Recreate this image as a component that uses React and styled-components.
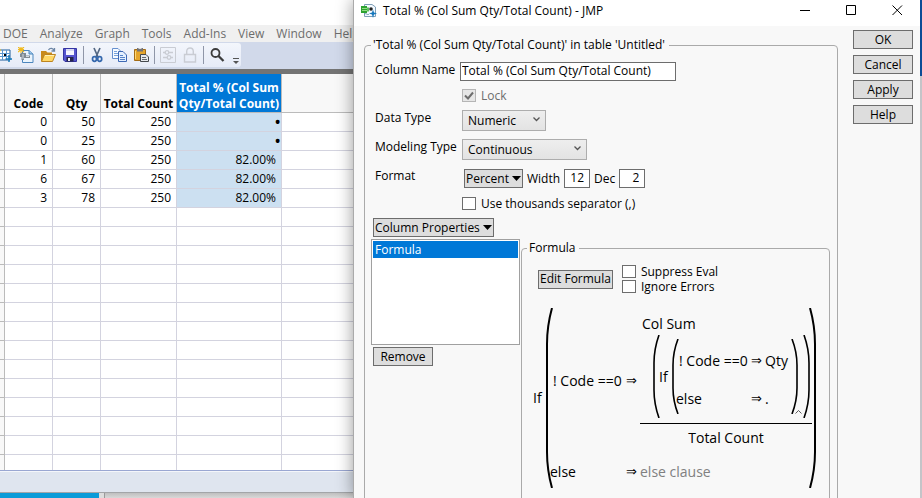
import React, { useState } from 'react';
import styled, { createGlobalStyle } from 'styled-components';

const rows = [
  { code: '0', qty: '50', total: '250', pct: '•' },
  { code: '0', qty: '25', total: '250', pct: '•' },
  { code: '1', qty: '60', total: '250', pct: '82.00%' },
  { code: '6', qty: '67', total: '250', pct: '82.00%' },
  { code: '3', qty: '78', total: '250', pct: '82.00%' },
];
const emptyRows = Array.from({ length: 15 }, (_, i) => i);
const menus = ['DOE', 'Analyze', 'Graph', 'Tools', 'Add-Ins', 'View', 'Window', 'Help'];

export default function App() {
  return (
    <>
      <GlobalStyle />
      <Desktop>
        <TableWindow />
        <ColumnDialog />
        <Edge />
      </Desktop>
    </>
  );
}

function TableWindow() {
  return (
    <MainWindow>
      <Caption />
      <MenuBar>
        {menus.map((menu) => (
          <MenuItem key={menu}>{menu}</MenuItem>
        ))}
      </MenuBar>
      <ToolStrip>
        <Tools>
          <Tool aria-label="New data table"><TableIcon /></Tool>
          <Tool aria-label="New script"><ScriptIcon /></Tool>
          <Tool aria-label="Open"><FolderIcon /></Tool>
          <Tool aria-label="Save"><DiskIcon /></Tool>
          <Separator />
          <Tool aria-label="Cut"><ScissorsIcon /></Tool>
          <Tool aria-label="Copy"><CopyIcon /></Tool>
          <Tool aria-label="Paste"><PasteIcon /></Tool>
          <Separator />
          <Tool aria-label="Filter" disabled><SlidersIcon /></Tool>
          <Tool aria-label="Lock" disabled><LockIcon /></Tool>
          <Separator />
          <Tool aria-label="Search"><SearchIcon /></Tool>
          <Overflow aria-label="More tools">
            <svg width="6" height="7" viewBox="0 0 6 7">
              <path d="M0 0.5H6" stroke="#555" />
              <path d="M0 3H6L3 6Z" fill="#555" />
            </svg>
          </Overflow>
        </Tools>
      </ToolStrip>
      <Sheet>
        <DataTable>
          <colgroup>
            <Col $width={5} />
            <Col $width={48} />
            <Col $width={48} />
            <Col $width={76} />
            <Col $width={105} />
            <col />
          </colgroup>
          <thead>
            <tr>
              <th></th>
              <th>Code</th>
              <th>Qty</th>
              <th>Total Count</th>
              <th className="selected">Total % (Col Sum<br />Qty/Total Count)</th>
              <th></th>
            </tr>
          </thead>
          <tbody>
            {rows.map((row, i) => (
              <tr key={i}>
                <td></td>
                <td>{row.code}</td>
                <td>{row.qty}</td>
                <td>{row.total}</td>
                <Percent $missing={row.pct === '•'}>{row.pct}</Percent>
                <td></td>
              </tr>
            ))}
            {emptyRows.map((i) => (
              <tr key={i}>
                <td></td><td></td><td></td><td></td><td></td><td></td>
              </tr>
            ))}
          </tbody>
        </DataTable>
      </Sheet>
      <StatusBar />
      <Behind>
        <BluePane />
        <GreyPane />
      </Behind>
    </MainWindow>
  );
}

function ColumnDialog() {
  const [name, setName] = useState('Total % (Col Sum Qty/Total Count)');
  const [width, setWidth] = useState('12');
  const [dec, setDec] = useState('2');

  return (
    <Dialog>
      <TitleBar>
        <JmpIcon />
        <Title>Total % (Col Sum Qty/Total Count) - JMP</Title>
        <WindowButton aria-label="Minimize">
          <svg width="11" height="11" viewBox="0 0 11 11"><path d="M0 5.5H10" stroke="#000" /></svg>
        </WindowButton>
        <WindowButton aria-label="Maximize">
          <svg width="11" height="11" viewBox="0 0 11 11"><path d="M0.5 0.5H9.5V9.5H0.5Z" fill="none" stroke="#000" /></svg>
        </WindowButton>
        <WindowButton aria-label="Close">
          <svg width="11" height="11" viewBox="0 0 11 11"><path d="M0.5 0.5L10 10M10 0.5L0.5 10" stroke="#000" /></svg>
        </WindowButton>
      </TitleBar>
      <DialogBody>
        <Group>
          <legend>'Total % (Col Sum Qty/Total Count)' in table 'Untitled'</legend>
          <Form>
            <label htmlFor="name">Column Name</label>
            <TextBox id="name" value={name} onChange={(e) => setName(e.target.value)} />

            <Control>
              <Check label="Lock" checked disabled />
            </Control>

            <label htmlFor="type">Data Type</label>
            <Control>
              <Picker id="type" width={84} options={['Numeric', 'Character', 'Row State']} />
            </Control>

            <label htmlFor="modeling">Modeling Type</label>
            <Control>
              <Picker id="modeling" width={125} options={['Continuous', 'Ordinal', 'Nominal']} />
            </Control>

            <span>Format</span>
            <Control $gap>
              <Button>Percent <Triangle /></Button>
              <label htmlFor="width">Width</label>
              <NumberBox id="width" value={width} onChange={(e) => setWidth(e.target.value)} />
              <label htmlFor="dec">Dec</label>
              <NumberBox id="dec" value={dec} onChange={(e) => setDec(e.target.value)} />
            </Control>

            <Control>
              <Check label="Use thousands separator (,)" />
            </Control>
          </Form>
          <Properties>
            <PropertyList>
              <Button>Column Properties <Triangle /></Button>
              <ListBox>
                <li>Formula</li>
              </ListBox>
              <Button $wide>Remove</Button>
            </PropertyList>
            <FormulaGroup>
              <legend>Formula</legend>
              <FormulaOptions>
                <Button>Edit Formula</Button>
                <div>
                  <Check label="Suppress Eval" />
                  <Check label="Ignore Errors" />
                </div>
              </FormulaOptions>
              <Formula />
            </FormulaGroup>
          </Properties>
        </Group>
        <Actions>
          <Button>OK</Button>
          <Button>Cancel</Button>
          <Button>Apply</Button>
          <Button>Help</Button>
        </Actions>
      </DialogBody>
    </Dialog>
  );
}

function Formula() {
  return (
    <Expression>
      <Keyword>If</Keyword>
      <Paren height={180} curve={36} weight={2} />
      <OuterClauses>
        <Condition>! Code ==0</Condition>
        <Arrow>⇒</Arrow>
        <Fraction>
          <Numerator>
            <span>Col Sum</span>
            <Argument>
              <Paren height={83} curve={28} weight={1.6} />
              <Keyword>If</Keyword>
              <Paren height={75} curve={26} weight={1.6} />
              <InnerClauses>
                <Condition>! Code ==0</Condition>
                <Arrow>⇒</Arrow>
                <span>Qty</span>
                <span>else</span>
                <Arrow>⇒</Arrow>
                <span>.</span>
              </InnerClauses>
              <Paren height={75} curve={26} weight={1.6} close />
              <Caret width="7" height="4" viewBox="0 0 7 4">
                <path d="M0.5 3.5L3.5 0.5L6.5 3.5" fill="none" stroke="#333" strokeWidth="0.8" />
              </Caret>
              <Paren height={83} curve={28} weight={1.6} close />
            </Argument>
          </Numerator>
          <Denominator>Total Count</Denominator>
        </Fraction>
        <span>else</span>
        <Arrow>⇒</Arrow>
        <Placeholder>else clause</Placeholder>
      </OuterClauses>
      <Paren height={180} curve={36} weight={2} close />
    </Expression>
  );
}

function Paren({ height, curve, weight, close }) {
  const d = close
    ? `M1 0Q6 ${curve / 2} 6 ${curve}V${height - curve}Q6 ${height - curve / 2} 1 ${height}`
    : `M7 0Q2 ${curve / 2} 2 ${curve}V${height - curve}Q2 ${height - curve / 2} 7 ${height}`;
  return (
    <ParenShape $close={close} width="8" height={height} viewBox={`0 0 8 ${height}`}>
      <path d={d} fill="none" stroke="#000" strokeWidth={weight} />
    </ParenShape>
  );
}

function Check({ label, checked = false, disabled }) {
  const [on, setOn] = useState(checked);
  return (
    <CheckLabel $disabled={disabled}>
      <CheckInput type="checkbox" checked={on} disabled={disabled} onChange={() => setOn(!on)} />
      {on && (
        <CheckMark width="14" height="13" viewBox="0 0 14 13">
          <path d="M3 6.5L6 9.5L11 3.5" fill="none" stroke="#6d6d6d" strokeWidth="2" />
        </CheckMark>
      )}
      {label}
    </CheckLabel>
  );
}

function Picker({ id, width, options }) {
  return (
    <PickerBox $width={width}>
      <select id={id}>
        {options.map((option) => (
          <option key={option}>{option}</option>
        ))}
      </select>
      <svg width="7" height="5" viewBox="0 0 7 5">
        <path d="M0.5 0.5L3.5 3.5L6.5 0.5" fill="none" stroke="#555" strokeWidth="1.3" />
      </svg>
    </PickerBox>
  );
}

const Triangle = () => (
  <svg width="9" height="5" viewBox="0 0 9 5">
    <path d="M0 0H9L4.5 5Z" fill="#000" />
  </svg>
);

const TableIcon = () => (
  <svg width="16" height="16" viewBox="0 0 16 16">
    <path d="M3 3H14V13H3Z" fill="#fff" stroke="#1d5c9c" />
    <path d="M3 6.5H14M3 9.5H14M6.5 3V13M10.5 3V13" stroke="#5a97cf" />
    <path d="M8 7H10V9H8Z" fill="#000" />
    <path d="M13 8V15M9.5 12H16" stroke="#1478b8" strokeWidth="1.5" />
    <path d="M3 0L5 3L3 6L1 3Z" fill="#f2c32c" />
  </svg>
);

const ScriptIcon = () => (
  <svg width="16" height="16" viewBox="0 0 16 16">
    <path d="M4.5 3.5H11L15 7V15.5H4.5Z" fill="#eaf4fd" stroke="#4c86bd" />
    <path d="M11 3.5V7H15" fill="#9ec7ea" stroke="#4c86bd" />
    <path d="M3 6H8V8.5H12V11H6V13H3.5V10H2V7Z" fill="#7f8a92" />
    <path d="M5 7V12M8 9.5H11" stroke="#d5dade" />
    <path d="M0 0L6 5M6 0L0 5M3 0V6M0 2.5H6" stroke="#f0b91e" strokeWidth="1.2" />
  </svg>
);

const FolderIcon = () => (
  <svg width="16" height="16" viewBox="0 0 16 16">
    <path d="M1 4H6L7.5 5.5H12V14H1Z" fill="#c98a1b" />
    <path d="M1.5 14.5L4.5 7.5H15.5L12.5 14.5Z" fill="#ffd765" stroke="#bd8420" />
    <path d="M5 8.5H14" stroke="#fff0b5" />
    <path d="M8.5 3C10 0.5 13 1 14 3.5M14.5 1V4H11.5" fill="none" stroke="#6d86a5" strokeWidth="1.3" />
  </svg>
);

const DiskIcon = () => (
  <svg width="16" height="16" viewBox="0 0 16 16">
    <path d="M1.5 1.5H14.5V14.5H3L1.5 13Z" fill="#5454cf" stroke="#3535a2" />
    <path d="M4 2H12V8H4Z" fill="#f5f6ff" />
    <path d="M4 3H12" stroke="#b9bce9" />
    <path d="M4.5 10H11.5V14.5H4.5Z" fill="#25254b" />
    <path d="M6 11H8V14H6Z" fill="#eee" />
  </svg>
);

const ScissorsIcon = () => (
  <svg width="16" height="16" viewBox="0 0 16 16">
    <path d="M5 1L9 10M11 1L7 10" stroke="#536783" strokeWidth="1.7" />
    <ellipse cx="5.5" cy="12" rx="2" ry="2.3" fill="none" stroke="#3568ad" strokeWidth="1.7" />
    <ellipse cx="10.7" cy="12" rx="2" ry="2.3" fill="none" stroke="#3568ad" strokeWidth="1.7" />
  </svg>
);

const CopyIcon = () => (
  <svg width="16" height="16" viewBox="0 0 16 16">
    <path d="M1.5 1.5H7L9.5 4V11.5H1.5Z" fill="#f7fbff" stroke="#6690cf" />
    <path d="M3 4.5H6M3 6.5H8M3 8.5H8" stroke="#78a2db" />
    <path d="M7.5 4.5H12L15.5 8V14.5H7.5Z" fill="#e4f0ff" stroke="#3e69b5" />
    <path d="M9 8.5H12M9 10.5H14M9 12.5H14" stroke="#5683c9" />
  </svg>
);

const PasteIcon = () => (
  <svg width="16" height="16" viewBox="0 0 16 16">
    <path d="M1.5 2.5H12.5V13.5H1.5Z" fill="#e5a52c" stroke="#a36c17" />
    <path d="M2.5 4V12" stroke="#ffd877" />
    <path d="M4 1H10V4.5H4Z" fill="#747477" />
    <path d="M5.5 1.5H8.5" stroke="#ddd" />
    <path d="M7.5 7.5H13L15.5 10V14.5H7.5Z" fill="#e6e9ed" stroke="#45494f" />
    <path d="M9 10.5H13M9 12.5H14" stroke="#65696e" />
  </svg>
);

const SlidersIcon = () => (
  <svg width="16" height="16" viewBox="0 0 16 16" fill="none" stroke="#c9ccd3">
    <path d="M0.5 0.5H15.5V15.5H0.5Z" />
    <path d="M3 5.5H5M9 5.5H13M3 10.5H7M11 10.5H13" strokeWidth="1.5" />
    <circle cx="7" cy="5.5" r="1.8" strokeWidth="1.3" />
    <circle cx="9" cy="10.5" r="1.8" strokeWidth="1.3" />
  </svg>
);

const LockIcon = () => (
  <svg width="16" height="16" viewBox="0 0 16 16" fill="none" stroke="#c9ccd3" strokeWidth="1.4">
    <path d="M2.5 7.5H13.5V15H2.5Z" />
    <path d="M4.7 7V4.5C4.7 -0.2 11.3 -0.2 11.3 4.5V7" />
  </svg>
);

const SearchIcon = () => (
  <svg width="16" height="16" viewBox="0 0 16 16" fill="none" stroke="#3c3c3c">
    <circle cx="6.5" cy="6" r="4" strokeWidth="1.8" />
    <path d="M9.5 9L14.5 14" strokeWidth="2.3" />
  </svg>
);

const JmpIcon = () => (
  <svg width="16" height="16" viewBox="0 0 16 16">
    <path d="M3.5 1.5H11L14.5 4V13.5H3.5Z" fill="#f5faff" stroke="#7f9fb7" />
    <path d="M0 3H6V10H0Z" fill="#2da22f" />
    <path d="M6 4.5H8V8.5H6Z" fill="#5cc15a" />
    <path d="M1 5.5H6M1 7.5H6" stroke="#92dc84" />
    <circle cx="10" cy="6" r="1.8" fill="#222" />
    <path d="M3 11.5C5 9 6.5 13 8 11" fill="none" stroke="#6c90ae" />
    <path d="M12 6.5L13 9.5L16 10.5L13 11.5L12 15L11 11.5L8 10.5L11 9.5Z" fill="#1678bd" />
  </svg>
);

const GlobalStyle = createGlobalStyle`
  * {
    box-sizing: border-box;
  }

  body {
    margin: 0;
    font-family: "Open Sans", "Noto Sans", sans-serif;
    font-size: 12px;
    line-height: 16px;
    color: #000;
    background: #fff;
  }

  button, input, select {
    font: inherit;
    color: inherit;
  }

  svg {
    flex: none;
  }
`;

const Desktop = styled.div`
  display: grid;
  grid-template-columns: minmax(0, 353fr) minmax(0, 567fr) 2px;
  height: 100vh;
  overflow: hidden;
`;

const MainWindow = styled.main`
  display: flex;
  flex-direction: column;
  min-height: 0;
  overflow: hidden;
`;

const Caption = styled.div`
  height: 25px;
  flex: none;
`;

const MenuBar = styled.nav`
  display: flex;
  flex: none;
  gap: 12px;
  height: 17px;
  padding-left: 3px;
  background: #f0f0f0;
  overflow: hidden;
`;

const MenuItem = styled.button`
  padding: 0;
  border: 0;
  background: none;
  color: #6d6d6d;
  white-space: nowrap;
`;

const ToolStrip = styled.div`
  flex: none;
  height: 32px;
  padding-top: 1px;
  background: #d1d9ea;
  border-bottom: 5px solid #747474;
  overflow: hidden;
`;

const Tools = styled.div`
  display: flex;
  align-items: center;
  width: 248px;
  height: 24px;
  margin-left: -7px;
  background: linear-gradient(#f3f6fc, #e6ebf7);
  border-radius: 0 3px 3px 0;
`;

const Tool = styled.button`
  display: flex;
  justify-content: center;
  flex: none;
  width: 22px;
  padding: 0;
  border: 0;
  background: none;
`;

const Separator = styled.span`
  width: 1px;
  height: 18px;
  margin: 0 2px;
  background: #8f96a8;
`;

const Overflow = styled.button`
  display: flex;
  align-self: flex-end;
  margin-left: auto;
  padding: 2px;
  border: 0;
  background: none;
`;

const Sheet = styled.div`
  flex: 1;
  min-height: 0;
  overflow: hidden;
`;

const Col = styled.col`
  width: ${({ $width }) => $width}px;
`;

const DataTable = styled.table`
  width: 100%;
  table-layout: fixed;
  border-collapse: separate;
  border-spacing: 0;

  th, td {
    padding: 0 5px 0 0;
    border-right: 1px solid #d3d3df;
    border-bottom: 1px solid #d3d3df;
    text-align: right;
  }

  th {
    height: 39px;
    padding: 0;
    border-color: #bbb;
    background: #f8f8f8;
    text-align: center;
    vertical-align: bottom;
    white-space: nowrap;
  }

  th.selected {
    color: #fff;
    background: #0078d7;
  }

  td {
    height: 19px;
    line-height: 16px;
  }

  td:first-child {
    background: #f8f8f8;
    border-color: #bbb;
  }

  th:last-child, td:last-child {
    border-right: 0;
  }
`;

const Percent = styled.td`
  background: #cce0f1;
  font-size: ${({ $missing }) => ($missing ? 18 : 12)}px;

  && {
    padding-right: ${({ $missing }) => ($missing ? 0 : 5)}px;
  }
`;

const StatusBar = styled.footer`
  flex: none;
  height: 23px;
  background: #dfe5ef;
  border-top: 1px solid #9aa7d2;
  border-bottom: 1px solid #a3a5a8;
  box-shadow: inset 0 1px #f4f6fa;
`;

const Behind = styled.div`
  display: flex;
  gap: 5px;
  flex: none;
  height: 5px;
  background: #ddd;
`;

const BluePane = styled.div`
  width: 99px;
  background: #0a9bd8;
`;

const GreyPane = styled.div`
  flex: 1;
  border-left: 1px solid #999;
  background: linear-gradient(#bfbfbf, #d8d8d8);
`;

const Dialog = styled.section`
  position: relative;
  display: flex;
  flex-direction: column;
  min-height: 0;
  background: #f8f8f8;
  border-left: 1px solid #aaa;
  box-shadow: 0 0 16px rgba(0, 0, 0, 0.4);
`;

const Edge = styled.div`
  position: relative;
  background: linear-gradient(#0b4c96 76px, #c4c4c8 76px);
`;

const TitleBar = styled.header`
  display: flex;
  align-items: center;
  flex: none;
  height: 26px;
  padding: 0 0 5px 7px;
  background: #fff;
`;

const Title = styled.h1`
  flex: 1;
  margin: 0 0 0 6px;
  font-size: 12px;
  font-weight: 400;
  white-space: nowrap;
`;

const WindowButton = styled.button`
  display: flex;
  justify-content: center;
  width: 46px;
  padding: 0;
  border: 0;
  background: none;
`;

const DialogBody = styled.div`
  display: flex;
  gap: 15px;
  flex: 1;
  min-height: 0;
  padding: 4px 7px 0 10px;
  overflow: hidden;
`;

const Group = styled.fieldset`
  flex: 1;
  align-self: flex-start;
  min-width: 0;
  margin: 7px 0 0;
  padding: 9px 7px 20px 6px;
  border: 1px solid #aaa;
  border-radius: 4px;

  legend {
    padding: 0 4px 0 2px;
  }
`;

const Form = styled.div`
  display: grid;
  grid-template-columns: 85px 1fr;
  grid-template-rows: 19px 13px 21px 21px 21px 13px;
  row-gap: 8px;
  margin: 0 0 8px 4px;
  white-space: nowrap;
`;

const TextBox = styled.input`
  width: 216px;
  height: 19px;
  padding: 0 1px 2px;
  border: 1px solid #6d6d6d;
  background: #fff;
`;

const NumberBox = styled(TextBox)`
  width: 26px;
  padding-right: 5px;
  text-align: right;
`;

const Control = styled.div`
  display: flex;
  align-items: center;
  grid-column: 2;
  gap: ${({ $gap }) => ($gap ? 4 : 0)}px;
  padding-left: ${({ $gap }) => ($gap ? 4 : 2)}px;
`;

const Button = styled.button`
  display: flex;
  align-items: center;
  justify-content: center;
  gap: 3px;
  flex: none;
  min-width: ${({ $wide }) => ($wide ? 60 : 0)}px;
  height: 19px;
  padding: 0 1px;
  border: 1px solid #6d6d6d;
  background: #ddd;
  white-space: nowrap;
`;

const PickerBox = styled.div`
  position: relative;
  width: ${({ $width }) => $width}px;

  select {
    display: block;
    width: 100%;
    height: 21px;
    padding: 0 5px;
    border: 1px solid #adadad;
    border-radius: 0;
    background: linear-gradient(#eee, #e3e3e3);
    appearance: none;
  }

  svg {
    position: absolute;
    top: 7px;
    right: 6px;
    pointer-events: none;
  }
`;

const CheckLabel = styled.label`
  position: relative;
  display: flex;
  align-items: center;
  gap: 5px;
  height: 15px;
  line-height: 15px;
  color: ${({ $disabled }) => ($disabled ? '#6d6d6d' : '#000')};
  white-space: nowrap;
`;

const CheckInput = styled.input`
  width: 14px;
  height: 13px;
  margin: 0;
  border: 1px solid #6d6d6d;
  background: #fff;
  appearance: none;

  &:disabled {
    border-color: #b5b5b5;
    background: #e6e6e6;
  }
`;

const CheckMark = styled.svg`
  position: absolute;
  left: 0;
  pointer-events: none;
`;

const Properties = styled.div`
  display: flex;
  gap: 1px;
`;

const PropertyList = styled.div`
  display: flex;
  flex-direction: column;
  align-items: flex-start;
  gap: 2px;
  flex: none;
  width: 149px;

  button {
    margin-left: 2px;
  }
`;

const ListBox = styled.ul`
  width: 100%;
  height: 106px;
  margin: 0;
  padding: 1px;
  border: 1px solid #a0a0a0;
  background: #fff;
  list-style: none;

  li {
    padding: 1px 0 0 2px;
    color: #fff;
    background: #0078d7;
  }
`;

const FormulaGroup = styled.fieldset`
  flex: 1;
  min-width: 0;
  margin: 22px 0 0;
  padding: 8px 5px 20px;
  border: 1px solid #aaa;
  border-radius: 4px;
`;

const FormulaOptions = styled.div`
  display: flex;
  align-items: center;
  gap: 9px;
  margin: 0 0 14px 11px;
`;

const Expression = styled.div`
  display: flex;
  align-items: center;
  padding-left: 6px;
  font-size: 14px;
  line-height: 20px;
  white-space: nowrap;
`;

const Keyword = styled.span`
  width: 12px;
`;

const ParenShape = styled.svg`
  margin: ${({ $close }) => ($close ? '0 0 0 -3px' : '0 -3px 0 0')};
`;

const OuterClauses = styled.div`
  display: grid;
  grid-template-columns: 76px 14px 172px;
  align-items: center;
  row-gap: 14px;
`;

const InnerClauses = styled.div`
  display: grid;
  grid-template-columns: 75px 14px 29px;
  row-gap: 18px;
  padding-top: 7px;
`;

const Condition = styled.span`
  padding-left: 3px;
`;

const Arrow = styled.span`
  font-family: "DejaVu Sans", sans-serif;
  font-size: 13px;
`;

const Fraction = styled.div`
  display: flex;
  flex-direction: column;
`;

const Numerator = styled.div`
  padding: 0 0 5px 2px;
  border-bottom: 1px solid #000;
`;

const Argument = styled.div`
  display: flex;
  align-items: center;
  padding: 1px 0 0 10px;

  ${Keyword} {
    margin-left: 2px;
  }
`;

const Caret = styled.svg`
  align-self: flex-end;
  margin: 0 4px 4px -4px;
`;

const Denominator = styled.div`
  padding-top: 4px;
  text-align: center;
`;

const Placeholder = styled.span`
  color: #808080;
`;

const Actions = styled.div`
  display: flex;
  flex-direction: column;
  gap: 6px;
  flex: none;
  width: 60px;
`;
